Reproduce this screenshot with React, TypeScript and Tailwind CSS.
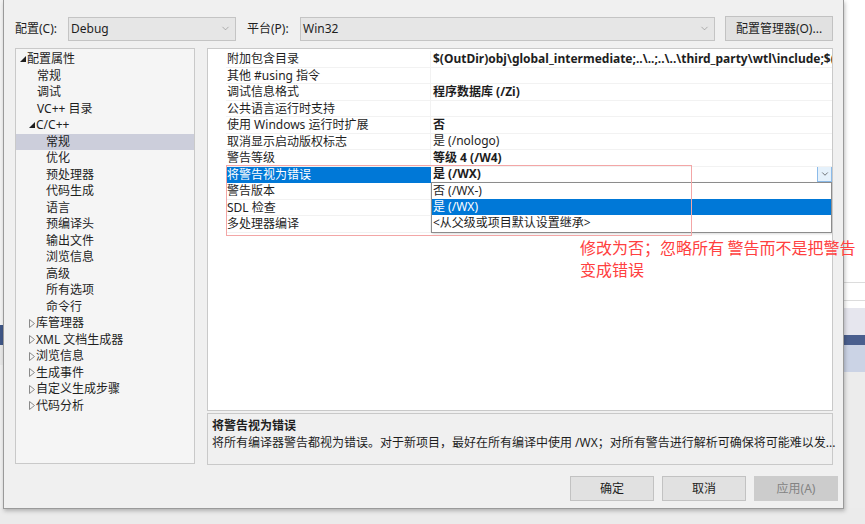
import { ChevronDown } from 'lucide-react'

type TreeItem = {
  label: string
  level: 0 | 1 | 2
  arrow?: 'open' | 'closed'
  selected?: boolean
}

const treeItems: TreeItem[] = [
  { label: '配置属性', level: 0, arrow: 'open' },
  { label: '常规', level: 1 },
  { label: '调试', level: 1 },
  { label: 'VC++ 目录', level: 1 },
  { label: 'C/C++', level: 1, arrow: 'open' },
  { label: '常规', level: 2, selected: true },
  { label: '优化', level: 2 },
  { label: '预处理器', level: 2 },
  { label: '代码生成', level: 2 },
  { label: '语言', level: 2 },
  { label: '预编译头', level: 2 },
  { label: '输出文件', level: 2 },
  { label: '浏览信息', level: 2 },
  { label: '高级', level: 2 },
  { label: '所有选项', level: 2 },
  { label: '命令行', level: 2 },
  { label: '库管理器', level: 1, arrow: 'closed' },
  { label: 'XML 文档生成器', level: 1, arrow: 'closed' },
  { label: '浏览信息', level: 1, arrow: 'closed' },
  { label: '生成事件', level: 1, arrow: 'closed' },
  { label: '自定义生成步骤', level: 1, arrow: 'closed' },
  { label: '代码分析', level: 1, arrow: 'closed' },
]

type Prop = { name: string; value?: string; bold?: boolean; selected?: boolean }

const props: Prop[] = [
  { name: '附加包含目录', value: '$(OutDir)obj\\global_intermediate;..\\..;..\\..\\third_party\\wtl\\include;$(', bold: true },
  { name: '其他 #using 指令' },
  { name: '调试信息格式', value: '程序数据库 (/Zi)', bold: true },
  { name: '公共语言运行时支持' },
  { name: '使用 Windows 运行时扩展', value: '否', bold: true },
  { name: '取消显示启动版权标志', value: '是 (/nologo)' },
  { name: '警告等级', value: '等级 4 (/W4)', bold: true },
  { name: '将警告视为错误', value: '是 (/WX)', bold: true, selected: true },
  { name: '警告版本' },
  { name: 'SDL 检查' },
  { name: '多处理器编译' },
]

function Arrow({ kind }: { kind: 'open' | 'closed' }) {
  if (kind === 'open') {
    return (
      <svg width="6" height="6" viewBox="0 0 6 6" className="shrink-0">
        <path d="M6 0 L6 6 L0 6 Z" fill="#1e1e1e" />
      </svg>
    )
  }
  return (
    <svg width="6" height="9" viewBox="0 0 6 9" className="shrink-0">
      <path d="M0.5 0.5 L5.5 4.5 L0.5 8.5 Z" fill="none" stroke="#8a8a8a" strokeWidth="1" />
    </svg>
  )
}

function TreeRow({ item }: { item: TreeItem }) {
  const pad =
    item.level === 0 ? 'pl-[4px]' : item.level === 1 ? (item.arrow ? 'pl-[13px]' : 'pl-[21px]') : 'pl-[30px]'
  return (
    <div
      className={`h-[16.5px] leading-[16.5px] flex items-center whitespace-nowrap ${pad} ${
        item.selected ? 'bg-[#cccedb]' : ''
      }`}
    >
      {item.arrow && (
        <span className="w-[7px] flex items-center">
          <Arrow kind={item.arrow} />
        </span>
      )}
      <span className="text-[#1e1e1e]">{item.label}</span>
    </div>
  )
}

function Combo({ text, width }: { text: string; width: string }) {
  return (
    <div
      className={`${width} h-[24px] bg-[#e6e6e6] border border-[#c4c4c4] flex items-center justify-between pl-[2px] pr-[4px]`}
    >
      <span className="text-[#1e1e1e]">{text}</span>
      <ChevronDown size={11} strokeWidth={1.2} color="#7a7a7a" />
    </div>
  )
}

function Button({ label, disabled }: { label: string; disabled?: boolean }) {
  return (
    <div
      className={`w-[84px] h-[25px] flex items-center justify-center border ${
        disabled ? 'bg-[#cccccc] border-[#cccccc] text-[#838383]' : 'bg-[#e1e1e1] border-[#c2c2c2] text-[#1e1e1e]'
      }`}
    >
      {label}
    </div>
  )
}

export default function App() {
  return (
    <div className="w-[865px] h-[524px] bg-[#ebebeb] overflow-hidden flex font-['Segoe_UI','Noto_Sans','Noto_Sans_CJK_SC',sans-serif] text-[12px]">
      {/* sliver of background window on the left */}
      <div className="w-[3px] h-[508px] flex flex-col bg-[#f3f3f3]">
        <div className="h-[325px]" />
        <div className="h-[20px] bg-[#3f5787]" />
        <div className="h-[20px] bg-[#e8e8e8]" />
        <div className="flex-1 bg-[#f0f0f0]" />
      </div>

      <div className="flex flex-col">
        {/* dialog */}
        <div className="relative w-[841px] h-[509px] bg-[#f0f0f0] border-l border-r border-b border-[#9a9a9a] shadow-[1px_2px_4px_rgba(0,0,0,0.25)]">
          {/* top row */}
          <div className="flex items-center mt-[16px] pl-[11px] h-[25px]">
            <span className="w-[53px] text-[#1e1e1e]">配置(C):</span>
            <Combo text="Debug" width="w-[168px]" />
            <span className="w-[53px] ml-[11px] text-[#1e1e1e]">平台(P):</span>
            <Combo text="Win32" width="w-[415px]" />
            <div className="ml-[10px] w-[108px] h-[25px] bg-[#e1e1e1] border border-[#c2c2c2] flex items-center justify-center text-[#1e1e1e]">
              配置管理器(O)...
            </div>
          </div>

          {/* main area */}
          <div className="flex mt-[7px] pl-[11px] gap-[12px]">
            {/* tree */}
            <div className="w-[180px] h-[416px] bg-[#f5f5f5] border border-[#c9c9c9] pt-[2px]">
              {treeItems.map((it, i) => (
                <TreeRow key={i} item={it} />
              ))}
            </div>

            <div className="w-[626px] flex flex-col gap-[2px]">
              {/* property grid */}
              <div className="relative h-[363px] bg-white border border-[#c9c9c9] pt-[2px] overflow-hidden">
                {props.map((p, i) => (
                  <div key={i} className="flex h-[16.5px] leading-[16.5px]">
                    <div className="w-[18px]" />
                    <div
                      className={`w-[205px] pl-[1px] whitespace-nowrap border-r border-b ${
                        p.selected
                          ? 'bg-[#0078d7] text-white border-[#0078d7]'
                          : 'text-[#1e1e1e] border-[#f2f2f2]'
                      }`}
                    >
                      {p.name}
                    </div>
                    <div className="flex-1 min-w-0 flex items-center justify-between border-b border-[#f2f2f2] pl-[2px] overflow-hidden">
                      <span
                        className={`whitespace-nowrap text-[#1e1e1e] ${p.bold ? 'font-bold' : ''}`}
                      >
                        {p.value}
                      </span>
                      {p.selected && (
                        <div className="shrink-0 w-[15px] h-[16px] bg-[#e5f1fb] border border-[#8cbbe9] flex items-center justify-center">
                          <ChevronDown size={10} strokeWidth={1.6} color="#333" />
                        </div>
                      )}
                    </div>
                  </div>
                ))}

                {/* open dropdown list */}
                <div className="absolute left-[223px] top-[133px] w-[401px] h-[51px] bg-white border border-[#8c8c8c] shadow-[1px_1px_2px_rgba(0,0,0,0.15)]">
                  <div className="h-[16px] leading-[16px] pl-[1px] text-[#1e1e1e]">否 (/WX-)</div>
                  <div className="h-[16px] leading-[16px] pl-[1px] bg-[#0078d7] text-white">是 (/WX)</div>
                  <div className="h-[16px] leading-[16px] pl-[1px] text-[#1e1e1e]">&lt;从父级或项目默认设置继承&gt;</div>
                </div>
              </div>

              {/* description */}
              <div className="h-[52px] bg-[#f0f0f0] border border-[#c9c9c9] pl-[4px] pt-[3px]">
                <div className="font-bold leading-[17px] text-[#1e1e1e]">将警告视为错误</div>
                <div className="leading-[17px] whitespace-nowrap text-[#1e1e1e]">
                  将所有编译器警告都视为错误。对于新项目，最好在所有编译中使用 /WX；对所有警告进行解析可确保将可能难以发...
                </div>
              </div>
            </div>
          </div>

          {/* buttons */}
          <div className="flex justify-end gap-[8px] mt-[11px] pr-[5px]">
            <Button label="确定" />
            <Button label="取消" />
            <Button label="应用(A)" disabled />
          </div>

          {/* annotation overlay */}
          <div className="absolute left-[222px] top-[165px] w-[466px] h-[71px] border border-[#f3a6a6] pointer-events-none" />
          <div className="absolute left-[576px] top-[236px] text-[16px] leading-[22px] text-[#ff4040] whitespace-nowrap font-['Noto_Sans_CJK_SC',sans-serif]">
            <div>修改为否；忽略所有 警告而不是把警告</div>
            <div>变成错误</div>
          </div>
        </div>
      </div>

      {/* sliver of background window on the right */}
      <div className="flex-1 h-[508px] flex flex-col bg-white">
        <div className="h-[282px]" />
        <div className="h-[1px] bg-[#dcdcdc]" />
        <div className="h-[17px]" />
        <div className="h-[1px] bg-[#dcdcdc]" />
        <div className="h-[7px]" />
        <div className="h-[27px] bg-[#e6e6ee]" />
        <div className="h-[10px] bg-[#4a5f8e]" />
        <div className="h-[27px] bg-[#cbd3e5]" />
        <div className="flex-1 bg-[#ececec]" />
      </div>
    </div>
  )
}
